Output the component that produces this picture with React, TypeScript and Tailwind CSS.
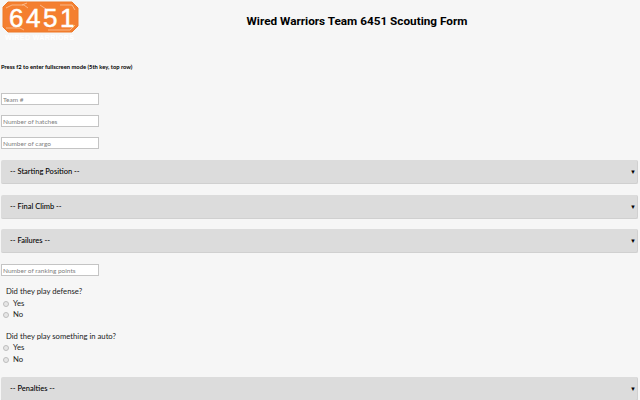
const font = { fontFamily: 'Lato, sans-serif' };

function Logo() {
    return (
        <div className="relative h-[42px] w-[80px] shrink-0">
            <svg viewBox="0 0 80 42" className="h-[42px] w-[80px]">
                <path d="M8 2H72L78 8V26L72 32H8L3 27V7Z" fill="#f47f30" stroke="#ee7a28" strokeWidth="1" />
                <path d="M6 8L12 5H24L28 8M22 5L27 3M40 5L46 9M60 5H72L75 10M6 28H20L24 30M48 30H70L75 25" fill="none" stroke="#fbc79e" strokeWidth="0.8" />
            </svg>
            <div className="absolute left-[9px] top-[5px] font-['Liberation_Sans',sans-serif] text-[26px] leading-[26px] tracking-[2.5px] text-white [-webkit-text-stroke:0.5px_white]">6451</div>
            <div className="absolute left-[5px] top-[34px] whitespace-nowrap font-['Liberation_Sans',sans-serif] text-[7px] font-bold leading-[7px] tracking-[0.4px] text-white">WIRED WARRIORS</div>
        </div>
    );
}

function NumInput({ placeholder, className }: { placeholder: string; className: string }) {
    return (
        <input
            type="text"
            placeholder={placeholder}
            className={`box-border ml-px block h-3 w-[98px] border border-[#c4c4c4] bg-white px-px font-['Lato',sans-serif] text-[6.5px] leading-none text-[#333] placeholder:text-[#808080] ${className}`}
        />
    );
}

function Dropdown({ label, className }: { label: string; className: string }) {
    return (
        <div className={`ml-px mr-[2px] flex h-6 items-center justify-between rounded-[2px] border-b border-r border-[#d0d0d0] bg-[#dcdcdc] pl-[9px] pr-px text-[7.5px] font-medium text-black ${className}`}>
            <span>{label}</span>
            <span className="text-[6px] leading-none">▼</span>
        </div>
    );
}

function Radio({ label, className }: { label: string; className?: string }) {
    return (
        <div className={`flex h-[11px] items-center text-[7.7px] leading-none text-[#222] ${className ?? ''}`}>
            <span className="ml-[3px] mr-[4px] h-[6px] w-[6px] rounded-full border border-[#bdbdbd] bg-[#e6e6e6]" />
            <span>{label}</span>
        </div>
    );
}

export default function App() {
    return (
        <div className="h-[400px] w-[640px] overflow-hidden bg-[#f6f6f6]" style={font}>
            <header className="flex h-[42px] items-start pr-[6px]">
                <Logo />
                <h1 className="mt-[13px] flex-1 text-center font-['Roboto',sans-serif] text-[11.75px] font-bold leading-[17px] text-black">
                    Wired Warriors Team 6451 Scouting Form
                </h1>
            </header>
            <p className="ml-px mt-[20px] text-[5.8px] font-bold leading-[9px] text-black">Press f2 to enter fullscreen mode (5th key, top row)</p>
            <NumInput placeholder="Team #" className="mt-[22px]" />
            <NumInput placeholder="Number of hatches" className="mt-[10px]" />
            <NumInput placeholder="Number of cargo" className="mt-[10px]" />
            <Dropdown label="-- Starting Position --" className="mt-[11px]" />
            <Dropdown label="-- Final Climb --" className="mt-[11px]" />
            <Dropdown label="-- Failures --" className="mt-[10px]" />
            <NumInput placeholder="Number of ranking points" className="mt-[11px]" />
            <p className="ml-[6px] mt-[10px] text-[7.7px] leading-[11px] text-[#222]">Did they play defense?</p>
            <Radio label="Yes" className="mt-px" />
            <Radio label="No" />
            <p className="ml-[6px] mt-[11px] text-[7.7px] leading-[11px] text-[#222]">Did they play something in auto?</p>
            <Radio label="Yes" />
            <Radio label="No" className="mt-px" />
            <Dropdown label="-- Penalties --" className="mt-3" />
        </div>
    );
}
